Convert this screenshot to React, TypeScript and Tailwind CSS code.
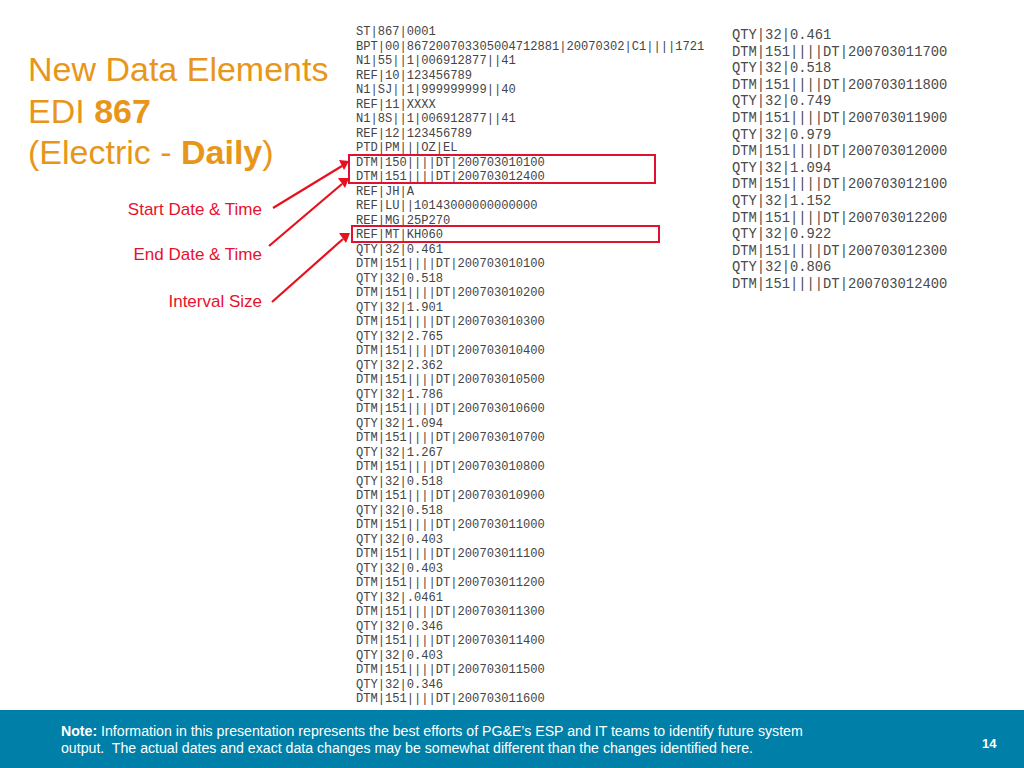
import React from 'react';

const MAIN_LINES = [
  'ST|867|0001',
  'BPT|00|867200703305004712881|20070302|C1||||1721',
  'N1|55||1|006912877||41',
  'REF|10|123456789',
  'N1|SJ||1|999999999||40',
  'REF|11|XXXX',
  'N1|8S||1|006912877||41',
  'REF|12|123456789',
  'PTD|PM|||OZ|EL',
  'DTM|150||||DT|200703010100',
  'DTM|151||||DT|200703012400',
  'REF|JH|A',
  'REF|LU||10143000000000000',
  'REF|MG|25P270',
  'REF|MT|KH060',
  'QTY|32|0.461',
  'DTM|151||||DT|200703010100',
  'QTY|32|0.518',
  'DTM|151||||DT|200703010200',
  'QTY|32|1.901',
  'DTM|151||||DT|200703010300',
  'QTY|32|2.765',
  'DTM|151||||DT|200703010400',
  'QTY|32|2.362',
  'DTM|151||||DT|200703010500',
  'QTY|32|1.786',
  'DTM|151||||DT|200703010600',
  'QTY|32|1.094',
  'DTM|151||||DT|200703010700',
  'QTY|32|1.267',
  'DTM|151||||DT|200703010800',
  'QTY|32|0.518',
  'DTM|151||||DT|200703010900',
  'QTY|32|0.518',
  'DTM|151||||DT|200703011000',
  'QTY|32|0.403',
  'DTM|151||||DT|200703011100',
  'QTY|32|0.403',
  'DTM|151||||DT|200703011200',
  'QTY|32|.0461',
  'DTM|151||||DT|200703011300',
  'QTY|32|0.346',
  'DTM|151||||DT|200703011400',
  'QTY|32|0.403',
  'DTM|151||||DT|200703011500',
  'QTY|32|0.346',
  'DTM|151||||DT|200703011600',
];

const SIDE_LINES = [
  'QTY|32|0.461',
  'DTM|151||||DT|200703011700',
  'QTY|32|0.518',
  'DTM|151||||DT|200703011800',
  'QTY|32|0.749',
  'DTM|151||||DT|200703011900',
  'QTY|32|0.979',
  'DTM|151||||DT|200703012000',
  'QTY|32|1.094',
  'DTM|151||||DT|200703012100',
  'QTY|32|1.152',
  'DTM|151||||DT|200703012200',
  'QTY|32|0.922',
  'DTM|151||||DT|200703012300',
  'QTY|32|0.806',
  'DTM|151||||DT|200703012400',
];

const ARROWS = [
  { x1: 273, y1: 208, x2: 342, y2: 166, a: '339,160 349,161 344,170' },
  { x1: 269, y1: 246, x2: 342, y2: 184, a: '338,178 349,178 345,188' },
  { x1: 272, y1: 302, x2: 343, y2: 239, a: '339,233 350,233 346,243' },
];

export default function App() {
  return (
    <div className="relative flex h-[768px] w-[1024px] flex-col overflow-hidden bg-white font-['Liberation_Sans',Arial,sans-serif]">
      <div className="flex h-[710px]">
        <div className="flex w-[262px] shrink-0 flex-col pt-[49px]">
          <h1 className="ml-[28px] w-[320px] text-[34px] font-normal leading-[41.5px] text-[#e8961a]">
            New Data Elements
            <br />
            EDI <b>867</b>
            <br />
            (Electric - <b>Daily</b>)
          </h1>
          <div className="mt-[27px] flex flex-col items-end text-[17px] leading-[18px] text-[#e8112d]">
            <div className="whitespace-nowrap">Start Date &amp; Time</div>
            <div className="mt-[27px] whitespace-nowrap">End Date &amp; Time</div>
            <div className="mt-[29px] whitespace-nowrap">Interval Size</div>
          </div>
        </div>

        <div className="relative ml-[94px] w-[376px] shrink-0 pt-[25px] font-['Liberation_Mono',monospace] text-[12.1px] leading-[14.5px] text-[#444444]">
          {MAIN_LINES.map((line, i) => (
            <div key={i} className="whitespace-pre">{line}</div>
          ))}
          <div className="absolute left-[-8px] top-[154px] h-[30px] w-[308px] border-2 border-[#e01030]" />
          <div className="absolute left-[-5px] top-[225px] h-[18px] w-[309px] border-2 border-[#e01030]" />
        </div>

        <div className="pt-[28px] font-['Liberation_Mono',monospace] text-[13.8px] leading-[16.6px] text-[#4a4a4a]">
          {SIDE_LINES.map((line, i) => (
            <div key={i} className="whitespace-pre">{line}</div>
          ))}
        </div>
      </div>

      <div className="flex h-[58px] items-start bg-[#0080a8] pl-[61px] pt-[13px] text-white">
        <p className="w-[800px] shrink-0 whitespace-nowrap text-[14.15px] leading-[17px]">
          <b>Note:</b> Information in this presentation represents the best efforts of PG&amp;E’s ESP and IT teams to identify future system
          <br />
          output.&nbsp; The actual dates and exact data changes may be somewhat different than the changes identified here.
        </p>
        <span className="ml-[121px] mt-[13px] text-[13px] font-bold leading-[16px]">14</span>
      </div>

      <svg className="absolute left-0 top-0" width="1024" height="768" fill="none">
        {ARROWS.map((a, i) => (
          <g key={i}>
            <line x1={a.x1} y1={a.y1} x2={a.x2} y2={a.y2} stroke="#e8101c" strokeWidth="2.2" />
            <polygon points={a.a} fill="#e8101c" />
          </g>
        ))}
      </svg>
    </div>
  );
}
